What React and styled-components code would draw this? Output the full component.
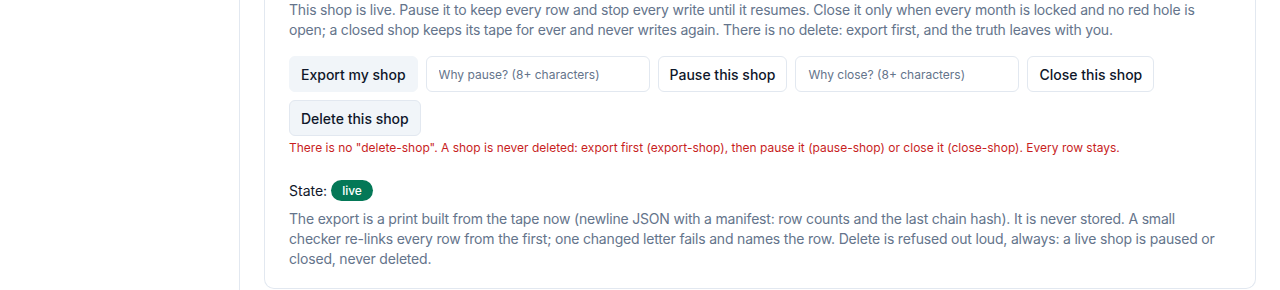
import styled, { createGlobalStyle } from "styled-components";

const GlobalStyle = createGlobalStyle`
    html, body {
        margin: 0;
        padding: 0;
        background: #fff;
        font-family: Inter, "Liberation Sans", sans-serif;
        color: #0f172a;
    }
`;

function App() {
    return (
        <Page>
            <GlobalStyle />
            <Sidebar />
            <Main>
                <Card>
                    <Lead>
                        This shop is live. Pause it to keep every row and stop every write until it
                        resumes. Close it only when every month is locked and no red hole is open; a
                        closed shop keeps its tape for ever and never writes again. There is no delete:
                        export first, and the truth leaves with you.
                    </Lead>
                    <Actions>
                        <Button $filled>Export my shop</Button>
                        <Reason placeholder="Why pause? (8+ characters)" />
                        <Button>Pause this shop</Button>
                        <Reason placeholder="Why close? (8+ characters)" />
                        <Button>Close this shop</Button>
                        <Button $filled $bordered>Delete this shop</Button>
                    </Actions>
                    <Refusal>
                        There is no "delete-shop". A shop is never deleted: export first (export-shop),
                        then pause it (pause-shop) or close it (close-shop). Every row stays.
                    </Refusal>
                    <StateLine>
                        State: <Badge>live</Badge>
                    </StateLine>
                    <Note>
                        The export is a print built from the tape now (newline JSON with a manifest: row
                        counts and the last chain hash). It is never stored. A small checker re-links
                        every row from the first; one changed letter fails and names the row. Delete is
                        refused out loud, always: a live shop is paused or closed, never deleted.
                    </Note>
                </Card>
            </Main>
        </Page>
    );
}

const Page = styled.div`
    display: flex;
    height: 290px;
    overflow: hidden;
`;

const Sidebar = styled.div`
    width: 239px;
    flex-shrink: 0;
    border-right: 1px solid #e2e8f0;
`;

const Main = styled.div`
    flex: 1;
    padding: 0 24px;
`;

const Card = styled.div`
    border: 1px solid #e2e8f0;
    border-top: none;
    border-radius: 0 0 10px 10px;
    padding: 0 28px 19px 24px;
`;

const Lead = styled.p`
    margin: 0;
    font-size: 14px;
    line-height: 20px;
    letter-spacing: -0.19px;
    color: #64748b;
`;

const Actions = styled.div`
    display: flex;
    flex-wrap: wrap;
    gap: 8px;
    margin-top: 16px;
`;

const Button = styled.button`
    height: 36px;
    padding: 0 11px;
    font-family: inherit;
    font-size: 14px;
    font-weight: 500;
    color: #0f172a;
    background: ${(p) => (p.$filled ? "#f1f5f9" : "#fff")};
    border: 1px solid ${(p) => (p.$filled && !p.$bordered ? "#f1f5f9" : "#e2e8f0")};
    border-radius: 6px;
    cursor: pointer;
`;

const Reason = styled.input`
    width: 224px;
    height: 36px;
    box-sizing: border-box;
    padding: 0 12px;
    font-family: inherit;
    font-size: 12px;
    color: #0f172a;
    border: 1px solid #e2e8f0;
    border-radius: 6px;
    outline: none;

    &::placeholder {
        color: #64748b;
    }
`;

const Refusal = styled.p`
    margin: 4px 0 0;
    font-size: 12px;
    line-height: 16px;
    color: #c81e1e;
`;

const StateLine = styled.div`
    margin-top: 24px;
    display: flex;
    align-items: center;
    gap: 4px;
    font-size: 14px;
    line-height: 20px;
`;

const Badge = styled.span`
    display: inline-flex;
    align-items: center;
    height: 21px;
    padding: 0 11px;
    border-radius: 999px;
    background: #047857;
    color: #fff;
    font-size: 12px;
    font-weight: 500;
`;

const Note = styled.p`
    margin: 8px 0 0;
    font-size: 14px;
    line-height: 20px;
    letter-spacing: -0.19px;
    color: #64748b;
`;

export default App;
